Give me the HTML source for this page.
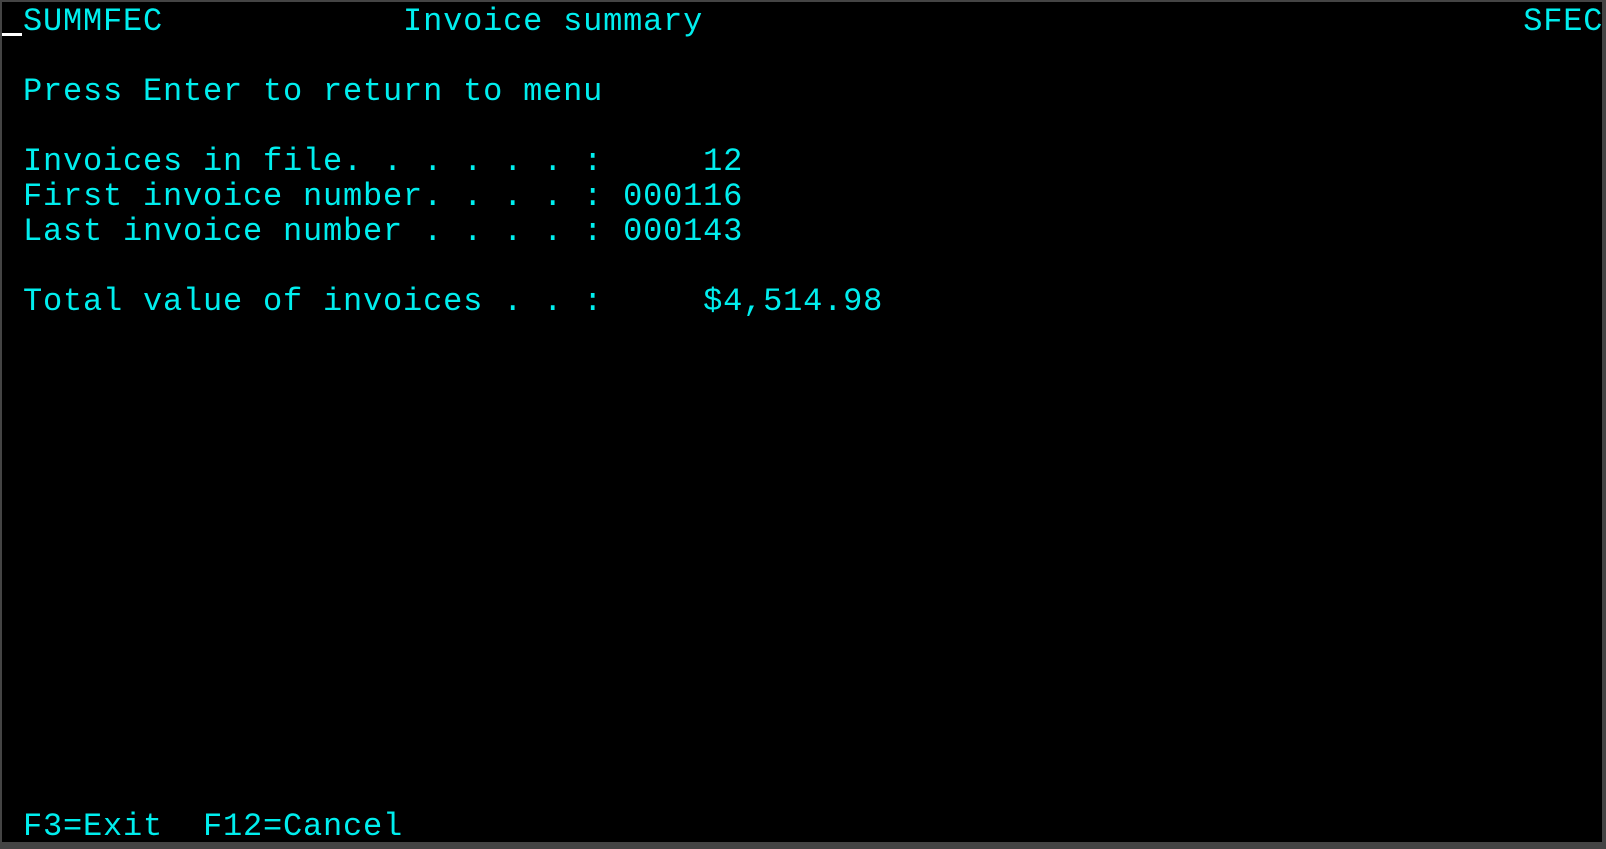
<!DOCTYPE html>
<html><head><meta charset="utf-8"><style>
html,body{margin:0;padding:0;}
body{width:1606px;height:849px;background:#444;position:relative;overflow:hidden;}
#scr{position:absolute;left:2px;top:2px;width:1600px;height:840px;background:#000;}
.l{position:absolute;left:3px;white-space:pre;font-family:"Liberation Mono",monospace;font-size:32px;letter-spacing:0.8px;line-height:35px;color:#00eeee;}
#cur{position:absolute;left:2px;top:33px;width:20px;height:3px;background:#fff;}
</style></head><body>
<div id="scr"></div>
<div id="cur"></div>
<div class="l" style="top:4px"> SUMMFEC            Invoice summary                                         SFEC</div>
<div class="l" style="top:74px"> Press Enter to return to menu</div>
<div class="l" style="top:144px"> Invoices in file. . . . . . :     12</div>
<div class="l" style="top:179px"> First invoice number. . . . : 000116</div>
<div class="l" style="top:214px"> Last invoice number . . . . : 000143</div>
<div class="l" style="top:284px"> Total value of invoices . . :     $4,514.98</div>
<div class="l" style="top:809px"> F3=Exit  F12=Cancel</div>
</body></html>
